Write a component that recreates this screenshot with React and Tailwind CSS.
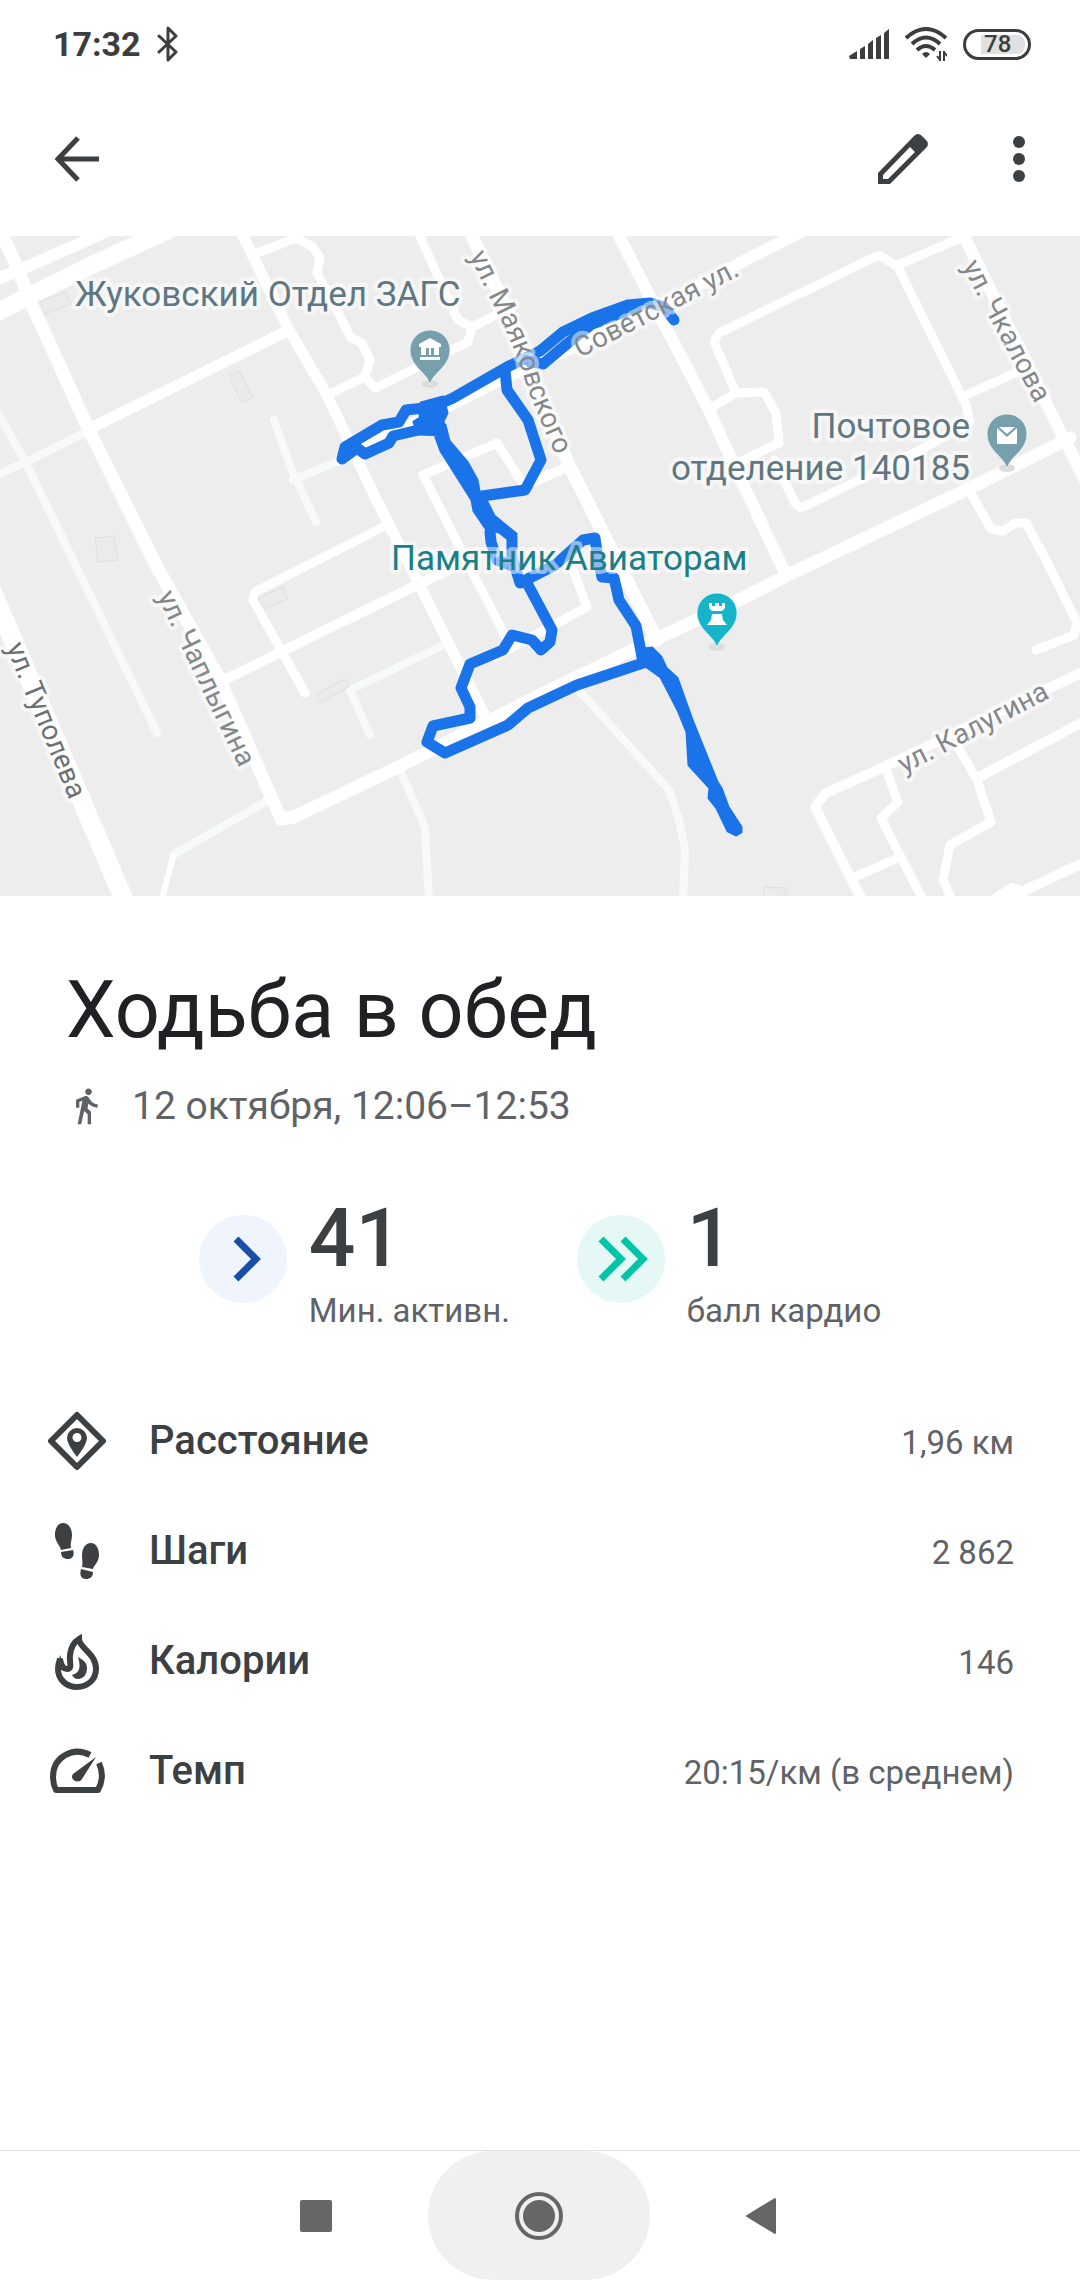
import { MdDirectionsWalk } from "react-icons/md";

const roads = [
  { w: 12, d: "M-5 280L15 272L110 230" },
  { w: 18, d: "M-5 313L31 295L90 266L175 227" },
  { w: 13, d: "M0 230L17 267L31 303L89 430L157 567L220 680L255 760L281 819L294 817L396 768L540 695L643 645L743 598L788 575L964 491L1070 438" },
  { w: 19, d: "M-20 563L125 902" },
  { w: 11, d: "M93 427L289 330" },
  { w: 11, d: "M240 230L289 330L327 395L375 497L417 580L457 660L484 714" },
  { w: 9, d: "M255 254L296 238L313 247L320 258L317 273L351 338L362 343L370 360L365 377L375 388L468 342L472 327L500 313" },
  { w: 9, d: "M365 377L327 395" },
  { w: 9, d: "M417 230L458 320L472 327" },
  { w: 13, d: "M469 230L505 305L528 370L570 467L657 640" },
  { w: 12, d: "M345 457L447 407L500 380L567 350L653 310L740 263L805 230" },
  { w: 12, d: "M616 230L650 297L709 410L733 463L786 575" },
  { w: 9, d: "M709 409L736 393L764 392L776 413L779 443L735 464" },
  { w: 9, d: "M736 393L714 342L719 333L879 255L898 267L966 405L970 422" },
  { w: 9, d: "M774 460L795 503L801 508L884 468L933 443L970 422" },
  { w: 9, d: "M898 265L965 236" },
  { w: 9, d: "M964 396L1022 370" },
  { w: 12, d: "M961 230L994 297L1043 397L1085 480" },
  { w: 9, d: "M969 490L991 529L1003 531L1015 523L1026 523L1046 560L1077 623L1074 635L1036 650" },
  { w: 10, d: "M1085 671L884 767L826 793L815 807L863 902" },
  { w: 9, d: "M886 770L898 802L881 818L924 902" },
  { w: 9, d: "M855 877L900 857" },
  { w: 9, d: "M958 747L977 780L991 822L950 845L943 880L953 902" },
  { w: 10, d: "M977 778L1085 721" },
  { w: 10, d: "M1000 902L1085 862M995 899L1012 888L1024 892" },
  { w: 9, d: "M383 527L255 592L253 600L305 693" },
  { w: 10, d: "M224 680L417 585L455 567" },
  { w: 9, d: "M507 640L423 475L497 443L525 487" },
  { w: 9, d: "M495 657L587 607L573 570" },
  { w: 10, d: "M528 484L570 466" },
  { w: 6, d: "M173 857L161 902" },
];

const alleys = [
  "M-5 408L26 463L157 733",
  "M-5 476L26 462L88 431",
  "M274 420L291 468L316 522",
  "M344 459L293 480",
  "M265 802L173 855",
  "M444 645L350 690L370 735",
  "M400 770L425 827L429 902",
  "M576 687L669 790L679 820L685 850L683 902",
];

const buildings =
  "M38 302L66 292L71 304L42 315ZM229 376L239 371L253 397L242 403ZM95 538L114 536L118 560L98 562ZM258 598L283 587L288 599L264 609ZM316 694L345 679L349 687L320 703ZM764 887L786 888L786 900M764 887V900";

const route = [
  "M674 320L664 307L650 303L628 305L592 318L563 332L540 351L507 367L453 398L433 407L406 410L399 422L382 425L345 447L342 459L357 448L365 454L389 443L393 436L427 428",
  "M640 306L592 324L568 343L543 364L530 362",
  "M505 370L507 390L528 420L541 460L525 490L482 496",
  "M490 532L491 542L497 560L512 566",
  "M490 520L512 537L512 557L520 583L555 565L583 540L595 538L598 560L602 577L614 578L619 600L636 626L643 662",
  "M527 583L552 630L550 642L541 650L532 640L512 635L503 650L470 664L461 688L470 707L470 718L433 726L427 742L445 753L508 725L528 708L577 685L643 663",
];

const routeBlobs =
  "M421 403L443 397L447 413L443 421L446 435L418 434L414 422L420 418ZM434 432L445 425L449 441L467 462L477 480L480 496L487 502L494 516L516 534L487 530L474 511L472 500L441 451ZM643 649L652 648L661 657L666 668L677 678L692 720L717 782L721 788L728 807L741 827L741 832L736 835L728 831L717 808L709 798L710 788L689 765L687 732L678 710L661 677L643 664Z";

const pins = [
  { x: 430, y: 350, fill: "#789fac", glyph: "M-11 -6L0 -12L11 -6V-3H9V5H4V-2H1V5H-1V-2H-4V5H-9V-3H-11ZM-10 7H10V10H-10Z" },
  { x: 1007, y: 434, fill: "#789fac", glyph: "M-10 -6L0 3L10 -6V10H-10ZM-8 -7H8L0 0Z" },
  { x: 717, y: 613, fill: "#16b4c8", glyph: "M-8 -10H-5V-7H-2V-10H2V-7H5V-10H8V-5L5 -2H-5L-8 -5ZM-5 1H5L6 7L10 12H-10L-6 7Z" },
];

const streets = [
  { id: "mayak", d: "M469 256L498 314Q519 358 526 384Q539 420 572 490", text: "ул. Маяковского", fill: "#85888a" },
  { id: "sovet", d: "M580 358L760 265", text: "Советская ул.", fill: "#85888a" },
  { id: "chkal", d: "M962 266L1060 450", text: "ул. Чкалова", fill: "#85888a" },
  { id: "chap", d: "M157 596L254 798", text: "ул. Чаплыгина", fill: "#85888a" },
  { id: "tupol", d: "M6 647L91 852", text: "ул. Туполева", fill: "#6b7073" },
  { id: "kalug", d: "M904 774L1065 690", text: "ул. Калугина", fill: "#85888a" },
];

function Map() {
  return (
    <svg viewBox="0 236 1080 660" className="block w-full bg-[#ededed] font-['Roboto',sans-serif]" role="img" aria-label="Карта маршрута">
      <g fill="none" stroke="#f8fafa" strokeWidth="8" strokeLinecap="round" strokeLinejoin="round">
        {alleys.map((d) => <path key={d} d={d} />)}
      </g>
      <path d={buildings} fill="#ebebeb" stroke="#dfdfdf" />
      <g fill="none" stroke="#fff" strokeLinejoin="round" strokeLinecap="round">
        {roads.map((r) => <path key={r.d} d={r.d} strokeWidth={r.w} />)}
      </g>

      <g fill="none" stroke="#1a73e8" strokeWidth="11" strokeLinejoin="round" strokeLinecap="round">
        {route.map((d) => <path key={d} d={d} />)}
      </g>
      <path d={routeBlobs} fill="#1a73e8" stroke="#1a73e8" strokeWidth="3" strokeLinejoin="round" />

      {pins.map((p) => (
        <g key={p.x} transform={`translate(${p.x} ${p.y})`}>
          <ellipse cx="0" cy="34" rx="8" ry="4" fill="#dcdcdc" />
          <path d="M0 35C-2 23 -20 17 -20 0A20 20 0 0 1 20 0C20 17 2 23 0 35Z" fill={p.fill} stroke="#fff" strokeOpacity=".6" />
          <path d={p.glyph} fill="#fff" />
        </g>
      ))}

      <g stroke="#fff" strokeOpacity=".5" strokeWidth="8" strokeLinejoin="round" style={{ paintOrder: "stroke" }}>
        {streets.map((s) => (
          <g key={s.id}>
            <path id={s.id} d={s.d} fill="none" stroke="none" />
            <text fontSize="28" fill={s.fill}>
              <textPath href={`#${s.id}`}>{s.text}</textPath>
            </text>
          </g>
        ))}
        <g fontSize="35" fill="#5f7782">
          <text x="75" y="306">Жуковский Отдел ЗАГС</text>
          <text x="970" y="438" textAnchor="end">Почтовое</text>
          <text x="970" y="480" textAnchor="end">отделение 140185</text>
          <text x="391" y="570" fill="#1a8087">Памятник Авиаторам</text>
        </g>
      </g>
    </svg>
  );
}

function StatusBar() {
  return (
    <div className="flex h-[88px] items-center justify-between pl-[53px] pr-[49px] text-[#3c3d3e]">
      <div className="flex items-center gap-4">
        <span className="text-[34px] leading-none font-bold">17:32</span>
        <svg viewBox="0 0 22 36" className="h-9 w-[22px]" fill="none" stroke="currentColor" strokeWidth="3" strokeLinejoin="round" strokeLinecap="round">
          <path d="M2 10L19 26L11 34V2L19 10L2 26" />
        </svg>
      </div>
      <div className="flex items-center gap-4">
        <svg viewBox="0 0 40 30" className="h-[30px] w-10" fill="currentColor">
          <path d="M0 27L8 22V30H1ZM11 20L16 17V30H11ZM19 15L24 11V30H19ZM27 9L32 6V30H27ZM35 4L40 0V30H35Z" />
        </svg>
        <svg viewBox="0 0 42 34" className="h-[34px] w-[42px]" fill="none" stroke="currentColor" strokeWidth="4">
          <path d="M1 11Q21 -7 41 11M7 17Q21 4 35 17M12 23Q21 15 30 23" />
          <path d="M17 27Q21 23 25 27L21 31Z" fill="currentColor" stroke="none" />
          <path d="M35 24V34M39 34V24M35 33L32 29M39 25L42 29" strokeWidth="2" />
        </svg>
        <div className="flex h-[31px] w-[68px] items-center rounded-full border-3 border-current pl-[15px]">
          <span className="flex h-[19px] w-[44px] items-center rounded-r-lg bg-[#e0e0e0] pl-[3px] text-2xl leading-none font-medium">78</span>
        </div>
      </div>
    </div>
  );
}

function AppBar() {
  return (
    <header className="mb-[6px] flex h-[142px] items-center justify-between pl-[53px] pr-[49px] text-[#3c4043]">
      <button aria-label="Назад">
        <svg viewBox="0 0 48 48" className="size-12" fill="none" stroke="currentColor" strokeWidth="5">
          <path d="M46 24H6M25 3L5 24L25 45" />
        </svg>
      </button>
      <div className="flex items-center gap-[78px]">
        <button aria-label="Изменить">
          <svg viewBox="0 0 52 52" className="size-[52px]" fill="currentColor" fillRule="evenodd">
            <path d="M1 40L37 3Q41 -1 45 3L49 7Q53 11 49 15L13 51H1ZM6 42V46H11L38 19L33 14Z" />
          </svg>
        </button>
        <button aria-label="Ещё">
          <svg viewBox="0 0 24 48" className="h-12 w-6" fill="currentColor">
            <circle cx="12" cy="7" r="6" />
            <circle cx="12" cy="24" r="6" />
            <circle cx="12" cy="41" r="6" />
          </svg>
        </button>
      </div>
    </header>
  );
}

function Stat({ value, label, tone, children }) {
  return (
    <div className="flex items-start gap-[22px]">
      <svg viewBox="0 0 88 88" className={`mt-[17px] size-[88px] rounded-full ${tone}`} fill="none" stroke="currentColor" strokeWidth="7">
        {children}
      </svg>
      <div>
        <div className="text-[82px] leading-[80px] font-medium text-[#3c4043]">{value}</div>
        <div className="mt-[11px] text-[33px] leading-[44px] text-[#5f6368]">{label}</div>
      </div>
    </div>
  );
}

const metrics = [
  {
    name: "Расстояние",
    value: "1,96 км",
    icon: (
      <>
        <path d="M30 4L56 30L30 56L4 30Z" fill="none" stroke="currentColor" strokeWidth="6" strokeLinejoin="round" />
        <path fillRule="evenodd" d="M30 46Q20 33 20 27A10 10 0 0 1 40 27Q40 33 30 46ZM30 22A4 4 0 0 0 30 31A4 4 0 0 0 30 22Z" />
      </>
    ),
  },
  {
    name: "Шаги",
    value: "2 862",
    icon: (
      <>
        <path d="M8 14C8 7 11 2 16 2C22 2 25 8 25 14C25 19 23 22 24 27L14 29C13 24 8 21 8 14ZM14 31L26 29C28 35 25 38 21 38C17 38 14 36 14 31Z" />
        <path d="M52 34C52 27 49 22 44 22C38 22 35 28 35 34C35 39 36 43 35 46L46 48C47 44 52 41 52 34ZM34 48L46 51C46 56 43 58 39 58C35 58 32 55 34 48Z" />
      </>
    ),
  },
  {
    name: "Калории",
    value: "146",
    icon: (
      <>
        <path d="M32 8C32 17 49 22 49 38C49 49 40 56 30 56C19 56 11 48 11 38C11 34 12 31 13 28C14 34 16 38 20 38C26 38 22 31 23 24C24 16 27 11 32 8Z" fill="none" stroke="currentColor" strokeWidth="6" strokeLinejoin="miter" />
        <path d="M31 26C36 29 40 31 40 37C40 44 36 48 31 48C28 48 26 46 25 44C33 42 34 36 31 26ZM13 24L11 38L20 40Z" />
      </>
    ),
  },
  {
    name: "Темп",
    value: "20:15/км (в среднем)",
    icon: (
      <>
        <path d="M43 14C26 5 6 16 6 36C6 41 7 45 9 49H51C56 40 56 31 52 22" fill="none" stroke="currentColor" strokeWidth="6" strokeLinejoin="round" />
        <path d="M49 16L35 38C31 44 22 38 26 33Z" />
      </>
    ),
  },
];

function NavBar() {
  return (
    <nav className="mt-auto flex h-[130px] items-stretch justify-center border-t border-[#e2e2e2] pr-0.5 text-[#666]">
      <button aria-label="Недавние" className="flex w-[224px] items-center justify-center">
        <span className="size-8 rounded-xs bg-current" />
      </button>
      <button aria-label="Домой" className="flex w-[222px] items-center justify-center rounded-[65px] bg-[#f0f0f0]">
        <span className="size-12 rounded-full border-4 border-current p-1">
          <span className="block size-8 rounded-full bg-current" />
        </span>
      </button>
      <button aria-label="Назад" className="flex w-[224px] items-center justify-center">
        <svg viewBox="0 0 32 38" className="h-[38px] w-8" fill="currentColor" stroke="currentColor" strokeWidth="2" strokeLinejoin="round">
          <path d="M1 19L29 2V36Z" />
        </svg>
      </button>
    </nav>
  );
}

export default function App() {
  return (
    <div className="flex min-h-screen flex-col bg-white font-['Roboto',sans-serif]">
      <StatusBar />
      <AppBar />
      <Map />

      <main className="pb-10">
        <h1 className="mt-[66px] px-[66px] text-[79px] leading-[96px] text-[#202124]">Ходьба в обед</h1>
        <div className="mt-5 flex items-center gap-[26px] px-[66px] text-[39px] leading-[56px] text-[#5f6368]">
          <MdDirectionsWalk className="size-10" />
          <span>12 октября, 12:06–12:53</span>
        </div>

        <div className="mt-[64px] flex justify-center gap-[67px]">
          <Stat value="41" label="Мин. активн." tone="bg-[#f0f4fc] text-[#174ea6]">
            <path d="M37 24L57 44L37 64" />
          </Stat>
          <Stat value="1" label="балл кардио" tone="bg-[#e6f8f5] text-[#00c4a7]">
            <path d="M24 24L44 44L24 64M46 24L66 44L46 64" />
          </Stat>
        </div>

        <dl className="mt-[53px]">
          {metrics.map((m) => (
            <div key={m.name} className="flex h-[110px] items-center pl-[47px] pr-[66px]">
              <svg viewBox="0 0 60 60" className="size-[60px] text-[#3c4043]" fill="currentColor">
                {m.icon}
              </svg>
              <dt className="ml-[42px] text-[40px] leading-[52px] font-medium text-[#3c4043]">{m.name}</dt>
              <dd className="ml-auto pt-1 text-[33px] leading-[52px] text-[#5f6368]">{m.value}</dd>
            </div>
          ))}
        </dl>
      </main>

      <NavBar />
    </div>
  );
}
